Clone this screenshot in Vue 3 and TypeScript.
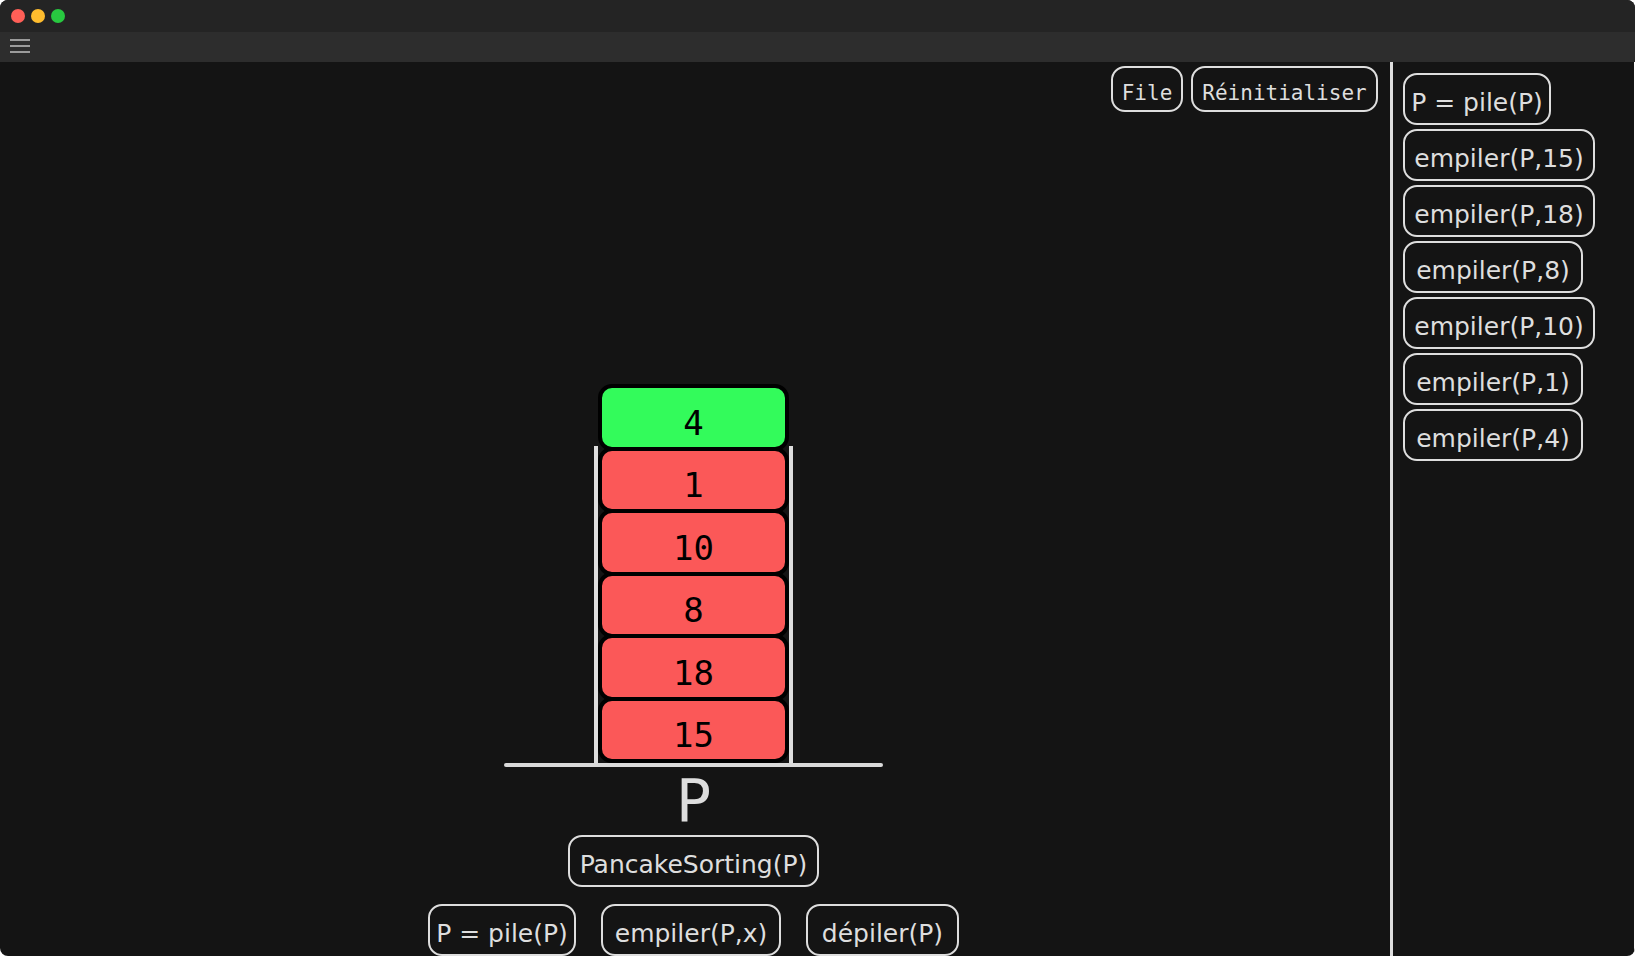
<script setup lang="ts">
interface Call {
  label: string
  size: string
}

const history: Call[] = [
  { label: 'P = pile(P)', size: 'w-create' },
  { label: 'empiler(P,15)', size: 'w-push-long' },
  { label: 'empiler(P,18)', size: 'w-push-long' },
  { label: 'empiler(P,8)', size: 'w-push' },
  { label: 'empiler(P,10)', size: 'w-push-long' },
  { label: 'empiler(P,1)', size: 'w-push' },
  { label: 'empiler(P,4)', size: 'w-push' },
]

const actions: Call[] = [
  { label: 'P = pile(P)', size: 'w-create' },
  { label: 'empiler(P,x)', size: 'w-push' },
  { label: 'dépiler(P)', size: 'w-pop' },
]

const stack: number[] = [4, 1, 10, 8, 18, 15]
</script>

<template>
  <div class="window">
    <header class="titlebar">
      <span class="light red"></span>
      <span class="light yellow"></span>
      <span class="light green"></span>
    </header>
    <nav class="menubar">
      <button class="menu" type="button" aria-label="Menu">
        <svg width="20" height="14" viewBox="0 0 20 14" aria-hidden="true">
          <path d="M0 1h20M0 7h20M0 13h20" stroke="#9b9b9b" stroke-width="2" />
        </svg>
      </button>
    </nav>
    <div class="body">
      <main class="stage">
        <div class="toolbar">
          <button class="pill tool w-file" type="button">File</button>
          <button class="pill tool w-reset" type="button">Réinitialiser</button>
        </div>
        <section class="pile">
          <div class="well">
            <div class="blocks">
              <div
                v-for="(value, i) in stack"
                :key="value"
                class="block"
                :class="{ top: i === 0 }"
              >{{ value }}</div>
            </div>
          </div>
          <div class="ground"></div>
          <div class="name">P</div>
        </section>
        <button class="pill w-sort" type="button">PancakeSorting(P)</button>
        <div class="actions">
          <button
            v-for="a in actions"
            :key="a.label"
            class="pill"
            :class="a.size"
            type="button"
          >{{ a.label }}</button>
        </div>
      </main>
      <aside class="history">
        <button
          v-for="c in history"
          :key="c.label"
          class="pill"
          :class="c.size"
          type="button"
        >{{ c.label }}</button>
      </aside>
    </div>
  </div>
</template>

<style>
body {
  margin: 0;
  background: #fff;
}
</style>

<style scoped>
.window {
  display: flex;
  flex-direction: column;
  min-height: 100vh;
  overflow: hidden;
  border-radius: 8px;
  background: #141414;
  color: #dedede;
  font-family: 'DejaVu Sans', sans-serif;
}
.titlebar {
  display: flex;
  align-items: center;
  gap: 6px;
  height: 32px;
  padding-left: 11px;
  background: #242424;
}
.light {
  width: 14px;
  height: 14px;
  border-radius: 50%;
}
.red { background: #ff5f57; }
.yellow { background: #ffbd2e; }
.green { background: #28c940; }
.menubar {
  display: flex;
  align-items: flex-start;
  box-sizing: border-box;
  height: 30px;
  padding: 7px 10px 0;
  background: #2d2d2d;
}
.menu {
  display: flex;
  padding: 0;
  border: 0;
  background: none;
}
.body {
  display: flex;
  flex: 1;
  border-right: 1px solid #fff;
}
.stage {
  display: flex;
  flex: 1;
  flex-direction: column;
  align-items: center;
  padding-right: 3px;
}
.pill {
  box-sizing: border-box;
  height: 52px;
  padding: 8px 0 0;
  border: 2px solid #dedede;
  border-radius: 14px;
  background: none;
  color: #dedede;
  font: 25px 'DejaVu Sans', sans-serif;
  line-height: 32px;
  text-align: center;
  white-space: nowrap;
}
.tool {
  height: 46px;
  font: 21px 'DejaVu Sans Mono', monospace;
}
.w-file { width: 72px; }
.w-reset { width: 187px; }
.w-create { width: 148px; }
.w-push { width: 180px; }
.w-push-long { width: 192px; }
.w-pop { width: 153px; }
.w-sort { width: 251px; }
.toolbar {
  display: flex;
  align-self: stretch;
  justify-content: flex-end;
  gap: 8px;
  padding: 4px 9px 0;
}
.pile {
  display: flex;
  flex-direction: column;
  align-items: center;
  margin-top: auto;
}
.well {
  padding: 0 4px;
  background:
    linear-gradient(#dedede, #dedede) left bottom / 4px 317px no-repeat,
    linear-gradient(#dedede, #dedede) right bottom / 4px 317px no-repeat;
}
.blocks {
  display: flex;
  flex-direction: column;
  width: 191px;
  height: 375px;
  padding-top: 4px;
}
.block {
  display: flex;
  flex: 1;
  align-items: center;
  justify-content: center;
  margin-top: -4px;
  padding-top: 11px;
  border: 4px solid #000;
  border-radius: 14px;
  background: #fb5858;
  color: #000;
  font: 34px 'DejaVu Sans Mono', monospace;
  line-height: 40px;
}
.top { background: #33fb5b; }
.ground {
  width: 379px;
  height: 4px;
  border-radius: 2px;
  background: #dadada;
}
.name {
  font-size: 58px;
  line-height: 68px;
}
.actions {
  display: flex;
  gap: 25px;
  margin-top: 17px;
}
.history {
  display: flex;
  flex-direction: column;
  align-items: flex-start;
  box-sizing: border-box;
  gap: 4px;
  width: 244px;
  padding: 11px 0 0 10px;
  border-left: 3px solid #dedede;
}
</style>
